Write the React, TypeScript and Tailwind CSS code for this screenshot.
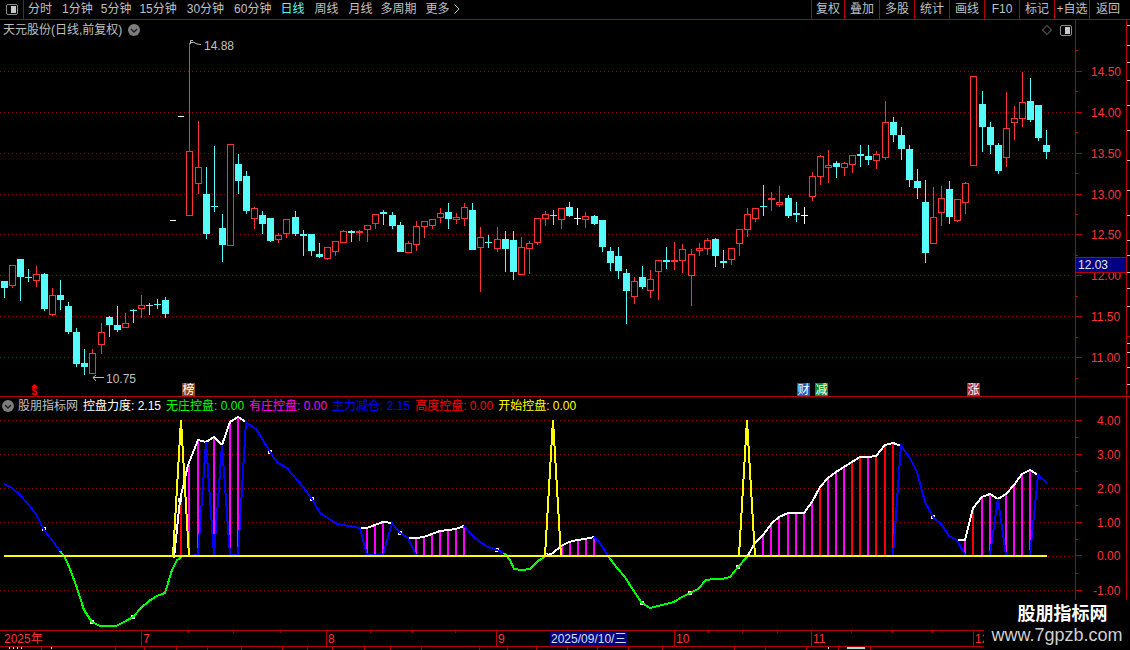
import React from "react";

type K = "c" | "r" | "s" | "w";
type C = [number, number, number, number, number, K];

const g1: C[] = [
  [13,153,174,153,204,"c"],[37,105,167,105,174,"r"],[61,87,141,87,213,"c"],[85,141,144,117,156,"c"],[109,132,153,108,171,"r"],
  [133,132,237,129,243,"c"],[157,195,255,174,258,"r"],[181,195,210,150,240,"c"],[205,228,306,216,312,"c"],[229,306,402,294,411,"c"],
  [253,399,411,357,435,"c"],[277,369,432,357,432,"r"],[304,306,345,279,372,"r"],[328,261,285,258,321,"c"],[352,285,300,228,306,"c"],
  [376,279,294,249,294,"r"],[400,240,243,237,279,"c"],[424,225,237,195,264,"r"],[448,225,228,219,255,"c"],[472,222,225,207,237,"c"],[496,210,252,201,264,"c"],
];
const g2: C[] = [
  [58,364,557,40,557,"r"],[85,412,461,273,491,"r"],[109,492,612,411,627,"c"],[133,528,531,348,546,"c"],[157,594,645,552,696,"c"],
  [181,343,647,343,647,"r"],[205,402,453,372,492,"c"],[229,438,543,423,552,"c"],[253,534,567,531,597,"r"],[277,555,582,543,612,"c"],
  [301,564,633,564,636,"c"],[325,615,629,609,639,"r"],[349,567,612,567,624,"r"],[376,561,612,543,618,"c"],[400,612,618,600,678,"c"],
  [424,612,663,612,678,"c"],[448,672,681,639,684,"c"],[472,651,687,651,690,"r"],[496,633,666,633,678,"r"],[520,603,639,600,639,"r"],
  [544,603,609,600,636,"c"],[568,603,609,600,633,"s"],[592,585,599,585,636,"r"],[616,552,582,552,597,"r"],[640,546,552,540,585,"c"],
  [667,555,588,546,597,"c"],[691,585,666,576,666,"c"],
];
const g3: C[] = [
  [25,189,219,183,219,"r"],[49,138,195,123,213,"r"],[73,123,141,123,174,"r"],[97,118,138,118,147,"r"],[121,99,114,84,129,"r"],
  [145,96,117,69,147,"c"],[169,111,120,99,132,"r"],[193,81,117,69,138,"r"],[217,90,210,69,210,"c"],[241,171,204,141,336,"r"],
  [265,186,189,165,204,"c"],[292,177,207,141,216,"r"],[316,177,207,153,276,"c"],[340,180,276,153,300,"c"],[364,201,285,171,285,"r"],
  [388,189,207,183,282,"r"],[412,114,189,114,195,"r"],[436,102,117,93,138,"r"],[460,104,107,90,135,"c"],[484,84,120,84,147,"r"],
  [508,81,108,66,111,"c"],[532,115,118,84,135,"w"],[556,108,120,96,144,"r"],[583,108,132,105,135,"c"],[607,120,201,120,216,"c"],
  [631,213,249,201,273,"c"],[655,228,273,201,297,"c"],[679,279,333,267,432,"c"],[703,303,351,291,372,"r"],[727,291,321,258,327,"c"],
  [751,297,333,270,354,"r"],[775,240,276,240,360,"r"],[799,240,246,201,267,"c"],[823,240,246,186,270,"s"],[847,207,243,192,279,"r"],
  [874,222,288,207,378,"r"],[898,204,213,189,228,"r"],[922,180,207,174,225,"r"],[946,177,228,174,261,"c"],[970,243,249,210,264,"c"],
];
const g4: C[] = [
  [34,474,510,474,525,"r"],[58,417,462,417,498,"r"],[82,372,420,354,441,"r"],[106,354,387,354,396,"r"],[130,348,351,285,378,"c"],
  [154,324,330,306,363,"s"],[178,336,345,288,351,"r"],[205,324,378,315,384,"c"],[229,369,375,336,396,"c"],[253,375,378,351,402,"w"],
  [277,258,321,246,333,"r"],[301,198,261,195,285,"r"],[325,225,234,180,279,"r"],[349,219,231,213,264,"c"],[373,219,234,216,258,"r"],
  [397,195,225,195,249,"r"],[421,192,198,165,231,"c"],[445,198,210,165,225,"c"],[469,192,213,183,237,"r"],[496,96,204,33,210,"r"],
  [520,96,135,81,156,"c"],[544,135,177,111,210,"c"],[568,177,270,165,291,"c"],[592,273,294,237,327,"c"],[616,336,489,270,519,"c"],
  [640,381,462,291,462,"r"],[664,324,369,288,408,"r"],[688,297,381,273,402,"c"],[712,327,393,327,396,"r"],[736,279,339,276,372,"r"],
  [760,-42,228,-42,228,"r"],[787,42,111,3,186,"c"],[811,111,165,96,192,"c"],[835,165,243,159,252,"c"],[859,114,204,6,231,"r"],
  [883,84,99,48,150,"r"],[907,36,87,-54,111,"r"],[931,33,90,-36,96,"c"],[955,45,144,45,153,"c"],[979,165,186,120,207,"c"],
];

const conv = (list: C[], ox: number, oy: number) =>
  list.map(([x, bt, bb, wt, wb, k]) => ({
    x: Math.floor(ox + x / 3),
    bt: Math.round(oy + bt / 3),
    bb: Math.round(oy + bb / 3),
    wt: Math.round(oy + wt / 3),
    wb: Math.round(oy + wb / 3),
    k,
  }));
const candles = [...conv(g1, 0, 230), ...conv(g2, 170, 30), ...conv(g3, 400, 180), ...conv(g4, 720, 90)];

const RED = "#ff3232";
const CYAN = "#54fcfc";
const FRAME = "#b40000";
const GRID = "#8c0000";

const pts = (a: number[][]) => a.map((p) => p.join(",")).join(" ");

const greenA = [[60,551],[64,556],[68,564],[76,585],[84,610],[92,622],[100,626],[108,626],[116,626],[124,622],[133,617],[141,608],[149,601],[157,596],[165,593],[172,570],[177,560],[182,557]];
const greenB = [[504,553],[510,560],[514,569],[522,570],[530,569],[538,561],[546,556]];
const greenC = [[608,556],[617,568],[625,577],[633,590],[642,603],[650,608],[658,606],[666,604],[674,602],[682,597],[690,593],[698,589],[706,580],[714,579],[722,579],[730,577],[738,567],[747,557]];
const white = [[174,558],[180,500],[188,465],[198,440],[206,442],[214,437],[222,445],[230,422],[238,417],[246,422]];
const whiteB = [[360,528],[367,528],[375,525],[383,522],[392,523]];
const whiteC = [[408,538],[416,538],[424,537],[432,534],[440,531],[448,530],[456,529],[464,526]];
const whiteD = [[546,556],[553,553],[561,546],[569,542],[577,540],[585,539],[594,537]];
const whiteE = [[747,557],[755,543],[763,535],[772,523],[779,517],[788,513],[796,513],[804,513],[812,502],[820,487],[828,478],[836,472],[844,467],[852,462],[860,457],[868,457],[876,456],[885,445],[893,443],[901,446]];
const whiteF = [[957,540],[965,540],[973,508],[982,497],[990,494],[998,499],[1006,494],[1014,485],[1022,474],[1030,470],[1038,475]];
const blue = [
  [[4,484],[12,488],[20,495],[28,504],[36,514],[44,530],[52,540],[60,551]],
  [[174,556],[189,556],[198,555],[206,442],[214,555],[222,445],[230,555],[238,555],[246,422],[257,430],[270,452],[278,463],[287,468],[303,487],[312,499],[320,513],[337,524],[343,525],[360,528],[367,555],[383,555],[392,523],[400,533],[408,538],[416,555]],
  [[464,526],[472,535],[480,542],[488,547],[497,550],[504,553]],
  [[546,556],[554,556]],
  [[594,537],[600,543],[608,556]],
  [[741,556],[755,556]],
  [[893,555],[901,446],[910,458],[917,472],[925,502],[933,517],[942,525],[949,536],[957,540],[965,555]],
  [[990,555],[998,499],[1006,555]],
  [[1030,555],[1038,475],[1047,483]],
];
const sticks: [number, number, string][] = [
  [181,502,"#ff0000"],[189,465,"#ff00ff"],[198,440,"#ff00ff"],[214,437,"#ff00ff"],[230,422,"#ff00ff"],[238,417,"#ff00ff"],
  [367,528,"#ff00ff"],[375,525,"#ff00ff"],[383,522,"#ff00ff"],[416,538,"#ff00ff"],[424,537,"#ff00ff"],[432,534,"#ff00ff"],[440,531,"#ff00ff"],[448,530,"#ff00ff"],[456,529,"#ff00ff"],[464,526,"#ff00ff"],
  [562,546,"#ff00ff"],[570,542,"#ff00ff"],[578,540,"#ff00ff"],[586,539,"#ff00ff"],[594,537,"#ff00ff"],
  [763,535,"#ff00ff"],[771,523,"#ff00ff"],[779,517,"#ff00ff"],[788,513,"#ff00ff"],[796,513,"#ff00ff"],[804,513,"#ff00ff"],[812,502,"#ff00ff"],[820,487,"#ff0000"],[828,478,"#ff00ff"],[836,472,"#ff00ff"],[844,467,"#ff00ff"],[852,462,"#ff0000"],[860,457,"#ff0000"],[868,457,"#ff00ff"],[876,456,"#ff0000"],[885,445,"#ff0000"],[893,443,"#ff0000"],
  [965,540,"#ff00ff"],[973,508,"#ff0000"],[982,497,"#ff00ff"],[990,494,"#ff00ff"],[1006,494,"#ff00ff"],[1014,485,"#ff00ff"],[1022,474,"#ff00ff"],[1030,470,"#ff00ff"],
];
const squares = [[44,529],[92,622],[133,617],[180,500],[270,452],[312,499],[400,533],[497,550],[546,555],[642,603],[690,593],[738,567],[933,517]];

const mainGrid = [71,112,153,194,234,275,316,357];
const subGrid = [420,454,488,522,590];

function Icon({ className }: { className: string }) {
  return (
    <span className={`inline-block w-[12px] h-[11px] rounded-[2px] border border-[#8c8c8c] relative ${className}`}>
      <span className="absolute right-[1px] top-[1px] bottom-[1px] w-[5px] bg-[#c8c8c8]" />
    </span>
  );
}

function Chevron() {
  return (
    <svg width="12" height="12" viewBox="0 0 12 12" className="shrink-0">
      <circle cx="6" cy="6" r="6" fill="#7d7d7d" />
      <path d="M3 5 L6 8 L9 5" fill="none" stroke="#1c1c1c" strokeWidth="1.4" />
    </svg>
  );
}

function Toolbar() {
  return (
    <div className="flex h-[20px] border-b border-[#b40000] text-[12px] text-[#c0c0c0] leading-[19px] shrink-0">
      <div className="w-[24px] border-r border-[#b40000] flex items-center justify-center"><Icon className="" /></div>
      <div className="flex ml-[4px]">
        <span>分时</span>
        <span className="ml-[10px]">1分钟</span>
        <span className="ml-[8px]">5分钟</span>
        <span className="ml-[8px]">15分钟</span>
        <span className="ml-[10px]">30分钟</span>
        <span className="ml-[10px]">60分钟</span>
        <span className="ml-[9px] text-[#54fcfc]">日线</span>
        <span className="ml-[10px]">周线</span>
        <span className="ml-[10px]">月线</span>
        <span className="ml-[8px]">多周期</span>
        <span className="ml-[9px]">更多</span>
        <svg width="8" height="10" viewBox="0 0 8 10" className="ml-[3px] mt-[4px]"><path d="M1.5 0.5 L6 5 L1.5 9.5" fill="none" stroke="#c0c0c0" /></svg>
      </div>
      <div className="ml-auto flex">
        <span className="w-[33px] border-l border-[#b40000] text-center">复权</span>
        <span className="w-[35px] border-l border-[#b40000] text-center">叠加</span>
        <span className="w-[35px] border-l border-[#b40000] text-center">多股</span>
        <span className="w-[35px] border-l border-[#b40000] text-center">统计</span>
        <span className="w-[35px] border-l border-[#b40000] text-center">画线</span>
        <span className="w-[35px] border-l border-[#b40000] text-center">F10</span>
        <span className="w-[35px] border-l border-[#b40000] text-center">标记</span>
        <span className="w-[35px] border-l border-[#b40000] text-center whitespace-nowrap">+自选</span>
        <span className="w-[41px] border-l border-[#b40000] pl-[6px]">返回</span>
      </div>
    </div>
  );
}

function Badge({ x, fill, t }: { x: number; fill: string; t: string }) {
  return (
    <g>
      <rect x={x} y="383" width="13" height="13" fill={fill} />
      <text x={x + 0.5} y="394" fill="#ffffff" fontSize="12">{t}</text>
    </g>
  );
}

function MainCanvas() {
  return (
    <svg className="absolute inset-0" width="1075" height="376" viewBox="0 20 1075 376">
      <g shapeRendering="crispEdges">
        {mainGrid.map((y) => (
          <line key={y} x1="0" x2="1075" y1={y + 0.5} y2={y + 0.5} stroke={GRID} strokeDasharray="1 3" />
        ))}
        {candles.map((c, i) => {
          const col = c.k === "c" ? CYAN : c.k === "w" ? "#ffffff" : RED;
          const h = Math.max(1, c.bb - c.bt);
          return (
            <g key={i}>
              <rect x={c.x} y={c.wt} width="1" height={Math.max(1, c.wb - c.wt)} fill={col} />
              {c.k === "r" ? (
                <rect x={c.x - 2.5} y={c.bt + 0.5} width="6" height={Math.max(1, h - 1)} fill="#000000" stroke={col} />
              ) : (
                <rect x={c.x - 3} y={c.bt} width="7" height={h} fill={col} />
              )}
            </g>
          );
        })}
        <rect x="178" y="116" width="6" height="1" fill="#ffffff" />
        <rect x="170" y="220" width="6" height="1" fill="#ffffff" />
      </g>
      <path d="M190.5 44 V40.5 H193 M190.5 42.5 H193 M193 42 L197 44 L201 44.5" fill="none" stroke="#c0c0c0" />
      <text x="204" y="50" fill="#c0c0c0" fontSize="12">14.88</text>
      <path d="M104 377.5 H93 M93 377.5 L96 375 M93 377.5 L96 381" fill="none" stroke="#c0c0c0" />
      <text x="106" y="383" fill="#c0c0c0" fontSize="12">10.75</text>
      <path d="M34.5 384 L31.5 387 H37.5 Z" fill="#ff0000" />
      <text x="31.5" y="395" fill="#ff0000" fontSize="10" fontWeight="700">$</text>
      <Badge x={182} fill="#8a4a12" t="榜" />
      <Badge x={797} fill="#1c5cc4" t="财" />
      <Badge x={815} fill="#0d8a2c" t="减" />
      <Badge x={967} fill="#b02424" t="涨" />
    </svg>
  );
}

function SubCanvas() {
  return (
    <svg className="absolute inset-0" width="1075" height="233" viewBox="0 397 1075 233">
      <g shapeRendering="crispEdges" fill="none">
        {subGrid.map((y) => (
          <line key={y} x1="0" x2="1075" y1={y + 0.5} y2={y + 0.5} stroke={GRID} strokeDasharray="1 3" />
        ))}
        <line x1="1048" x2="1075" y1="556" y2="556" stroke={GRID} strokeDasharray="1 3" />
        {squares.map(([x, y], i) => (
          <rect key={i} x={x - 1.5} y={y - 1.5} width="3" height="3" stroke="#ffffff" fill="#000000" />
        ))}
        {sticks.map(([x, y, col], i) => (
          <rect key={i} x={x - 1} y={y} width="2" height={556 - y} fill={col} />
        ))}
        {[white, whiteB, whiteC, whiteD, whiteE, whiteF].map((a, i) => (
          <polyline key={i} points={pts(a)} stroke="#ffffff" strokeWidth="2" />
        ))}
        {blue.map((a, i) => (
          <polyline key={i} points={pts(a)} stroke="#0000ff" strokeWidth="2" />
        ))}
        {[greenA, greenB, greenC].map((a, i) => (
          <polyline key={i} points={pts(a)} stroke="#00ff00" strokeWidth="2" />
        ))}
        <polyline points="173,556 181,420 189,556" stroke="#ffff00" strokeWidth="2" />
        <polyline points="545,556 553,420 561,556" stroke="#ffff00" strokeWidth="2" />
        <polyline points="739,556 747,420 755,556" stroke="#ffff00" strokeWidth="2" />
        <rect x="4" y="555" width="1043" height="2" fill="#ffff00" />
      </g>
    </svg>
  );
}

function MainAxis() {
  const labels: [number, string][] = [[71,"14.50"],[112,"14.00"],[153,"13.50"],[194,"13.00"],[234,"12.50"],[275,"12.00"],[316,"11.50"],[357,"11.00"]];
  const minor = [50,91,132,173,214,255,296,337,378];
  const right = [25,45,62,80,105,130,160,190,215,240,255,272,288,306,343,352,367,384];
  return (
    <svg className="absolute inset-0" width="55" height="376" viewBox="1075 20 55 376">
      {labels.map(([y, t]) => (
        <g key={t}>
          <rect x="1075" y={y} width="7" height="1" fill={FRAME} shapeRendering="crispEdges" />
          <text x="1091" y={y + 5} fill={RED} fontSize="12">{t}</text>
        </g>
      ))}
      {minor.map((y) => <rect key={y} x="1075" y={y} width="3" height="1" fill={FRAME} shapeRendering="crispEdges" />)}
      {right.map((y) => <rect key={y} x="1127" y={y} width="3" height="1" fill="#c0c0c0" shapeRendering="crispEdges" />)}
      <rect x="1127" y="336" width="3" height="1" fill={FRAME} shapeRendering="crispEdges" />
    </svg>
  );
}

function SubAxis() {
  const labels: [number, string, number][] = [[420,"4.00",1097],[454,"3.00",1097],[488,"2.00",1097],[522,"1.00",1097],[555,"0.00",1097],[590,"-1.00",1093]];
  const minor = [437,471,505,539,573,607];
  return (
    <svg className="absolute inset-0" width="55" height="233" viewBox="1075 397 55 233">
      {labels.map(([y, t, x]) => (
        <g key={t}>
          <rect x="1075" y={y} width="7" height="1" fill={FRAME} shapeRendering="crispEdges" />
          <text x={x} y={y + 5} fill={RED} fontSize="12">{t}</text>
        </g>
      ))}
      {minor.map((y) => <rect key={y} x="1075" y={y} width="3" height="1" fill={FRAME} shapeRendering="crispEdges" />)}
    </svg>
  );
}

function TimeAxis() {
  const seps: [number, string][] = [[141,"7"],[326,"8"],[496,"9"],[674,"10"],[811,"11"],[973,"12"]];
  const ticks = [188,233,280,370,412,455,708,742,777,851,892,932];
  return (
    <svg className="absolute inset-0" width="1130" height="15" viewBox="0 631 1130 15">
      <text x="4" y="643" fill={RED} fontSize="12">2025年</text>
      {seps.map(([x, t]) => (
        <g key={x}>
          <rect x={x} y="631" width="1" height="15" fill={FRAME} shapeRendering="crispEdges" />
          <text x={x + 2} y="643" fill={RED} fontSize="12">{t}</text>
        </g>
      ))}
      {ticks.map((x) => <rect key={x} x={x} y="631" width="1" height="2" fill={FRAME} shapeRendering="crispEdges" />)}
      <rect x="550" y="631" width="77" height="15" fill="#000080" shapeRendering="crispEdges" />
      <text x="551" y="643" fill="#d8e0f0" fontSize="12">2025/09/10/三</text>
    </svg>
  );
}

function Status() {
  const w = [42,74,29,32,31,34,41,25,25,32,26,31,58,28,29,31,30,31,34,72,31,41,32,32,259];
  const marks = [9,13,17,21,51,828];
  return (
    <div className="relative h-[4px] flex shrink-0 overflow-hidden">
      {w.map((v, i) => <div key={i} className="border-r border-[#b40000] h-full" style={{ width: v }} />)}
      {marks.map((x) => <span key={x} className="absolute top-0 w-[1px] h-[2px] bg-[#e0e0e0]" style={{ left: x }} />)}
      <span className="absolute top-0 left-[847px] w-[18px] h-[2px] bg-[#8fe8e8]" />
    </div>
  );
}

export default function App() {
  return (
    <div className="relative w-[1130px] h-[650px] bg-black overflow-hidden flex flex-col font-['Liberation_Sans','Noto_Sans_CJK_SC',sans-serif] text-[12px]">
      <Toolbar />
      <div className="flex h-[377px] border-b border-[#b40000] shrink-0">
        <div className="relative w-[1075px]">
          <MainCanvas />
          <div className="relative flex items-center h-[20px] pl-[3px] pr-[3px] text-[#c0c0c0]">
            <span className="w-[125px] whitespace-nowrap">天元股份(日线,前复权)</span>
            <Chevron />
            <svg width="10" height="10" viewBox="0 0 10 10" className="ml-auto mr-[8px]"><path d="M5 0.5 L9.5 5 L5 9.5 L0.5 5 Z" fill="none" stroke="#7d7d7d" /></svg>
            <Icon className="" />
          </div>
        </div>
        <div className="relative w-[55px] flex">
          <div className="w-[52px] border-x border-[#b40000]" />
          <MainAxis />
          <div className="absolute left-0 top-[237px] w-[52px] h-[16px] bg-[#000080] border border-[#b40000] text-[#e0e8f0] leading-[14px] pl-[2px]">12.03</div>
        </div>
      </div>
      <div className="flex h-[234px] border-b border-[#b40000] shrink-0">
        <div className="relative w-[1075px]">
          <SubCanvas />
          <div className="relative flex items-center h-[17px] pl-[2px] whitespace-nowrap">
            <Chevron />
            <span className="ml-[4px] text-[#c0c0c0] w-[65px]">股朋指标网</span>
            <span className="text-white">控盘力度: 2.15</span>
            <span className="ml-[5px] text-[#00ff00]">无庄控盘: 0.00</span>
            <span className="ml-[5px] text-[#ff00ff]">有庄控盘: 0.00</span>
            <span className="ml-[5px] text-[#0000ff]">主力减仓: 2.15</span>
            <span className="ml-[5px] text-[#ff0000]">高度控盘: 0.00</span>
            <span className="ml-[5px] text-[#ffff00]">开始控盘: 0.00</span>
          </div>
        </div>
        <div className="relative w-[55px] flex">
          <div className="w-[52px] border-x border-[#b40000]" />
          <SubAxis />
        </div>
      </div>
      <div className="relative h-[16px] border-b border-[#b40000] shrink-0">
        <TimeAxis />
      </div>
      <Status />
      <div className="absolute right-0 bottom-0 w-[146px] h-[50px] bg-black flex flex-col items-center">
        <span className="text-[18px] leading-[22px] mt-[3px] ml-[11px] font-bold text-white">股朋指标网</span>
        <span className="text-[18px] leading-[18px] mt-[1px] text-[#d0d0d0]">www.7gpzb.com</span>
      </div>
    </div>
  );
}
